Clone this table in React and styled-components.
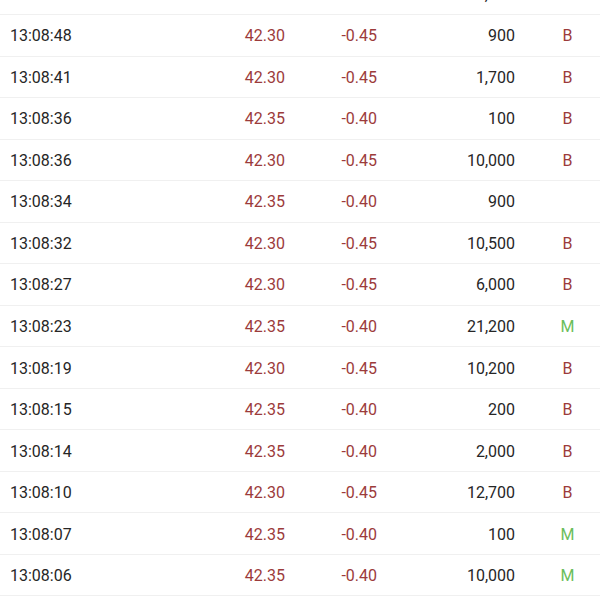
import React from 'react';
import styled, { createGlobalStyle } from 'styled-components';

const GlobalStyle = createGlobalStyle`
  body {
    margin: 0;
    background: #ffffff;
    font-family: Roboto, "Noto Sans", sans-serif;
  }
`;

const List = styled.div`
  width: 600px;
  height: 600px;
  overflow: hidden;
`;

const Inner = styled.div`
  margin-top: -26.5px;
`;

const Row = styled.div`
  display: grid;
  grid-template-columns: 180px 95px 92px 138px 1fr;
  align-items: center;
  box-sizing: border-box;
  height: 41.54px;
  padding-left: 10px;
  padding-top: 1px;
  border-bottom: 1px solid #f0f0f0;
  font-size: 16px;
`;

const Time = styled.span`
  color: #262626;
`;

const Num = styled.span`
  text-align: right;
  color: ${(props) => (props.red ? '#9c3b3b' : '#262626')};
`;

const Side = styled.span`
  text-align: center;
  padding-left: 20px;
  color: ${(props) => (props.side === 'M' ? '#6bbd5b' : '#9c3b3b')};
`;

const trades = [
  ['13:08:49', '42.30', '-0.45', '1,000', 'B'],
  ['13:08:48', '42.30', '-0.45', '900', 'B'],
  ['13:08:41', '42.30', '-0.45', '1,700', 'B'],
  ['13:08:36', '42.35', '-0.40', '100', 'B'],
  ['13:08:36', '42.30', '-0.45', '10,000', 'B'],
  ['13:08:34', '42.35', '-0.40', '900', ''],
  ['13:08:32', '42.30', '-0.45', '10,500', 'B'],
  ['13:08:27', '42.30', '-0.45', '6,000', 'B'],
  ['13:08:23', '42.35', '-0.40', '21,200', 'M'],
  ['13:08:19', '42.30', '-0.45', '10,200', 'B'],
  ['13:08:15', '42.35', '-0.40', '200', 'B'],
  ['13:08:14', '42.35', '-0.40', '2,000', 'B'],
  ['13:08:10', '42.30', '-0.45', '12,700', 'B'],
  ['13:08:07', '42.35', '-0.40', '100', 'M'],
  ['13:08:06', '42.35', '-0.40', '10,000', 'M'],
];

export default function App() {
  return (
    <>
      <GlobalStyle />
      <List>
        <Inner>
          {trades.map(([time, price, change, vol, side], i) => (
            <Row key={i}>
              <Time>{time}</Time>
              <Num red>{price}</Num>
              <Num red>{change}</Num>
              <Num>{vol}</Num>
              <Side side={side}>{side}</Side>
            </Row>
          ))}
        </Inner>
      </List>
    </>
  );
}
